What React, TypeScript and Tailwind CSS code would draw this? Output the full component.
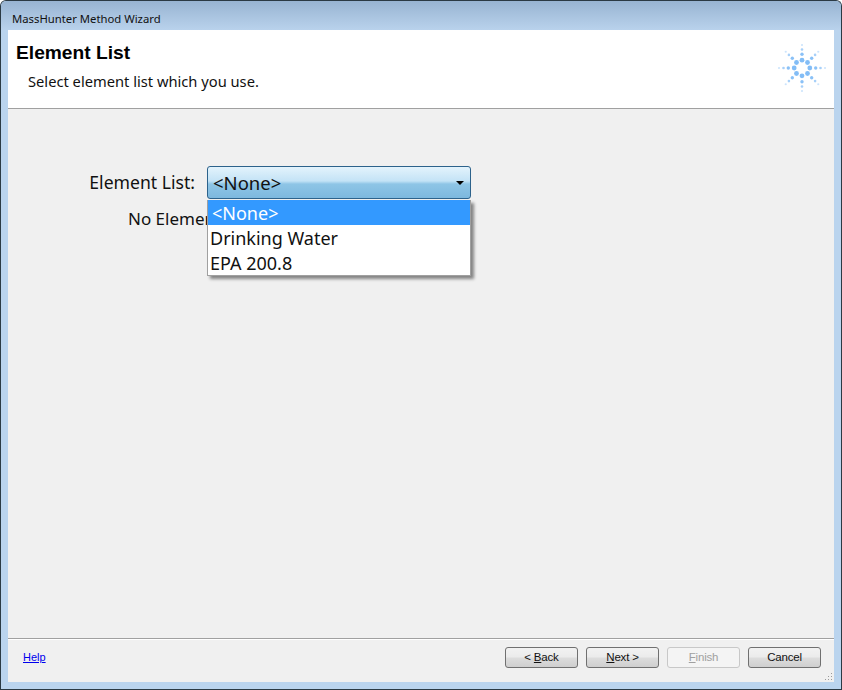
const SEGOE = "font-['Noto_Sans',sans-serif]";
const TAHOMA = "font-['Liberation_Sans',sans-serif]";

const SPOKES = [0, 45, 90, 135, 180, 225, 270, 315];
const RINGS = [
  { r: 7.8, size: 2.4, opacity: 0.85 },
  { r: 13.7, size: 1.7, opacity: 0.8 },
  { r: 18.5, size: 1.3, opacity: 0.6 },
  { r: 23, size: 1.1, opacity: 0.35 },
];

function Logo() {
  return (
    <svg width="52" height="52" viewBox="-26 -26 52 52" className="block">
      {SPOKES.map((a) =>
        RINGS.map((ring) => (
          <circle
            key={`${a}-${ring.r}`}
            cx={Math.cos((a * Math.PI) / 180) * ring.r}
            cy={Math.sin((a * Math.PI) / 180) * ring.r}
            r={ring.size}
            fill="#6db1f5"
            opacity={ring.opacity}
          />
        )),
      )}
    </svg>
  );
}

function WizardButton({ pre, mnemonic, post, disabled }: { pre?: string; mnemonic?: string; post?: string; disabled?: boolean }) {
  return (
    <button
      type="button"
      className={`flex h-[21px] w-[73px] items-center justify-center rounded-[3px] border pt-[1px] text-[11.5px] tracking-[-0.2px] ${TAHOMA} ${
        disabled
          ? 'border-[#c8c8c8] bg-[#f4f4f4] text-[#a0a0a0]'
          : 'border-[#707070] bg-[linear-gradient(#f2f2f2_0%,#ebebeb_48%,#dddddd_52%,#cfcfcf_100%)] text-[#111]'
      }`}
    >
      <span className="whitespace-pre">
        {pre}
        {mnemonic && <span className="underline">{mnemonic}</span>}
        {post}
      </span>
    </button>
  );
}

export default function App() {
  return (
    <div className="flex h-[690px] w-[842px] flex-col overflow-hidden rounded-t-[6px] border-x border-t border-[#2b3a44] bg-[#bad4ee]">
      {/* Title bar */}
      <div className={`flex h-[29px] items-center bg-[linear-gradient(#98b4d2,#b9d2ec)] pl-[11px] pt-[7px] text-[11.3px] text-[#111] ${SEGOE}`}>
        MassHunter Method Wizard
      </div>

      <div className="mx-[7px] flex min-h-0 flex-1 flex-col bg-[#f0f0f0]">
        {/* Header */}
        <div className="flex h-[79px] justify-between border-b border-[#a0a0a0] bg-white">
          <div>
            <h1 className={`pl-[8px] pt-[12px] text-[19.2px] leading-[22px] font-bold text-black ${TAHOMA}`}>Element List</h1>
            <p className={`pl-[20px] pt-[7px] text-[14.7px] leading-[20px] text-[#111] ${SEGOE}`}>Select element list which you use.</p>
          </div>
          <div className="pr-[6px] pt-[12px]">
            <Logo />
          </div>
        </div>

        {/* Body */}
        <div className="flex-1 pt-[57px]">
          <div className="flex items-center">
            <label className={`w-[199px] pr-[12px] text-right text-[17.6px] text-[#111] ${SEGOE}`}>Element List:</label>
            <div className="relative w-[264px]">
              <div className={`flex h-[33px] items-center justify-between rounded-[3px] border border-[#2c628b] bg-[linear-gradient(#e3f3fc_0%,#c4e3f6_45%,#8ec5e6_55%,#7db8de_100%)] pl-[5px] pr-[6px] text-[18.5px] text-[#111] ${SEGOE}`}>
                &lt;None&gt;
                <span className="h-0 w-0 border-x-[4px] border-t-[4px] border-x-transparent border-t-black" />
              </div>
              {/* Open list */}
              <ul className={`absolute left-0 top-[34px] z-10 w-[264px] border border-[#a0a0a0] border-t-0 bg-white text-[18px] leading-[27px] text-[#111] shadow-[3px_3px_3px_rgba(0,0,0,0.45)] ${SEGOE}`}>
                <li className="h-[25px] bg-[#3399ff] pl-[4px] text-white">&lt;None&gt;</li>
                <li className="h-[25px] pl-[2px]">Drinking Water</li>
                <li className="h-[25px] pl-[2px]">EPA 200.8</li>
              </ul>
            </div>
          </div>
          <p className={`pl-[120px] pt-[8px] text-[17px] leading-[24px] text-[#111] ${SEGOE}`}>No Element List</p>
        </div>

        {/* Footer */}
        <div className="relative flex h-[44px] items-start justify-between border-t border-[#a0a0a0] pl-[15px] pr-[13px] pt-[8px] shadow-[inset_0_1px_0_#ffffff]">
          <a className={`pt-[2px] text-[11px] leading-[16px] text-[#0000ee] underline ${TAHOMA}`}>Help</a>
          <div className="flex gap-[8px]">
            <WizardButton pre="< " mnemonic="B" post="ack" />
            <WizardButton mnemonic="N" post="ext >" />
            <WizardButton mnemonic="F" post="inish" disabled />
            <WizardButton pre="Cancel" />
          </div>
          <svg width="10" height="10" viewBox="0 0 10 10" className="absolute bottom-[1px] right-[1px]">
            {[[8, 2], [5, 5], [8, 5], [2, 8], [5, 8], [8, 8]].map(([x, y]) => (
              <rect key={`${x}-${y}`} x={x} y={y} width="1" height="1" fill="#9a9a9a" />
            ))}
          </svg>
        </div>
      </div>
      <div className="h-[8px] shrink-0 border-b border-[#2b3a44]" />
    </div>
  );
}
